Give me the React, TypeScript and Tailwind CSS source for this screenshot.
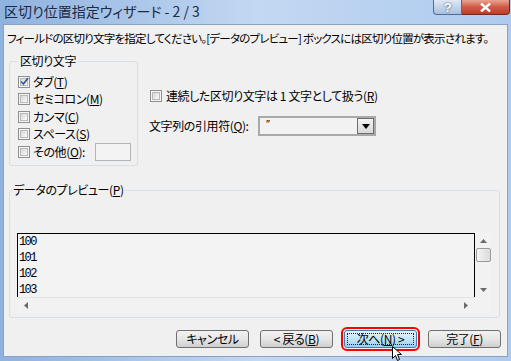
import React from "react";

const jp = "font-['Noto_Sans_CJK_JP',sans-serif] [font-feature-settings:'palt']";

function Check({ checked = false }: { checked?: boolean }) {
  return (
    <span className="flex h-[12px] w-[12px] shrink-0 items-center justify-center border border-[#8e8f8f] bg-[#f4f4f4]">
      <span className="flex h-[8px] w-[8px] items-center justify-center border border-[#b9b9b9] bg-gradient-to-br from-[#d6d6d6] to-[#fbfbfb]">
        {checked && (
          <svg width="9" height="9" viewBox="0 0 9 9" className="overflow-visible">
            <path d="M1 4.5 L3.5 7 L8 1" fill="none" stroke="#3355a8" strokeWidth="1.7" />
          </svg>
        )}
      </span>
    </span>
  );
}

function Acc({ label, k }: { label: string; k: string }) {
  return (
    <span>
      {label}(<span className="underline">{k}</span>)
    </span>
  );
}

function Btn({ children, active = false }: { children: React.ReactNode; active?: boolean }) {
  return (
    <div
      className={
        active
          ? "flex h-[18px] w-[73px] items-center justify-center rounded-[3px] border border-[#3c7fb1] bg-gradient-to-b from-[#e5f4fc] via-[#c4e5f6] to-[#98d1ef] p-[2px] outline-2 outline-offset-[1px] outline-[#ff0000]"
          : "flex h-[18px] w-[73px] items-center justify-center rounded-[3px] border border-[#707070] bg-gradient-to-b from-[#f2f2f2] via-[#e6e6e6] to-[#cfcfcf]"
      }
    >
      {active ? (
        <span className="flex h-full w-full items-center justify-center border border-dotted border-[#222]">{children}</span>
      ) : (
        children
      )}
    </div>
  );
}

function Tri({ dir }: { dir: "up" | "down" | "left" | "right" }) {
  const d = {
    up: "M0 4 L3.5 0 L7 4 Z",
    down: "M0 0 L7 0 L3.5 4 Z",
    left: "M4 0 L4 7 L0 3.5 Z",
    right: "M0 0 L4 3.5 L0 7 Z",
  }[dir];
  const w = dir === "up" || dir === "down" ? 7 : 4;
  const h = dir === "up" || dir === "down" ? 4 : 7;
  return (
    <svg width={w} height={h} viewBox={`0 0 ${w} ${h}`}>
      <path d={d} fill="#6b6b6b" />
    </svg>
  );
}

export default function App() {
  return (
    <div className={`relative flex h-[361px] w-[511px] flex-col overflow-hidden bg-gradient-to-r from-[#8fb2df] via-[#c3d8f2] to-[#aecbef] text-[12px] tracking-[-0.4px] text-black ${jp}`}>
      {/* title bar */}
      <div className="flex h-[24px] shrink-0 items-start justify-between">
        <span className="pl-[4px] pt-[2px] text-[14px] leading-[18px] tracking-normal text-[#1c2b44]">区切り位置指定ウィザード - 2 / 3</span>
        <div className="mr-[1px] flex h-[15px]">
          <div className="flex w-[29px] items-center justify-center rounded-bl-[4px] border border-t-0 border-[#4e6c94] bg-gradient-to-b from-[#dfe9f6] to-[#a9c0de] font-['Liberation_Sans',sans-serif] text-[13px] font-bold leading-none text-white [text-shadow:0_0_2px_#2a3b55]">
            ?
          </div>
          <div className="flex w-[48px] items-center justify-center rounded-br-[4px] border border-l-0 border-t-0 border-[#6d2b25] bg-gradient-to-b from-[#e8a493] via-[#cf5a44] to-[#c23c26]">
            <svg width="11" height="9" viewBox="0 0 11 9">
              <path d="M1 0.5 L10 8.5 M10 0.5 L1 8.5" stroke="#fff" strokeWidth="2.4" />
            </svg>
          </div>
        </div>
      </div>

      {/* dialog body */}
      <div className="mx-[3px] mb-[4px] flex flex-1 flex-col border border-[#8aa2c2] bg-[#f0f0f0]">
        <div className="whitespace-nowrap pl-[3px] pt-[6px] text-[11.5px] leading-[14px] tracking-[-0.78px]">
          フィールドの区切り文字を指定してください。[データのプレビュー] ボックスには区切り位置が表示されます。
        </div>

        <div className="mt-[9px] flex">
          <fieldset className="ml-[5px] h-[112px] w-[129px] rounded-[3px] border border-[#d5dfe5] pl-[8px]">
            <legend className="px-[2px] leading-[14px]">区切り文字</legend>
            <div className="mt-[5px] flex flex-col">
              <label className="flex h-[17.5px] items-center gap-[3px]">
                <Check checked />
                <Acc label="タブ" k="T" />
              </label>
              <label className="flex h-[17.5px] items-center gap-[3px]">
                <Check />
                <Acc label="セミコロン" k="M" />
              </label>
              <label className="flex h-[17.5px] items-center gap-[3px]">
                <Check />
                <Acc label="カンマ" k="C" />
              </label>
              <label className="flex h-[17.5px] items-center gap-[3px]">
                <Check />
                <Acc label="スペース" k="S" />
              </label>
              <label className="flex h-[17.5px] items-center gap-[3px]">
                <Check />
                <span>
                  その他(<span className="underline">O</span>):
                </span>
                <span className="ml-auto mr-[6px] h-[18px] w-[36px] border border-[#b5b5b5] bg-[#f3f3f3]" />
              </label>
            </div>
          </fieldset>

          <div className="ml-[11px] flex flex-col pt-[33px]">
            <label className="flex items-center gap-[4px] pl-[1px]">
              <Check />
              <span>
                連続した区切り文字は 1 文字として扱う(<span className="underline">R</span>)
              </span>
            </label>
            <div className="mt-[11px] flex items-center">
              <span className="w-[109px]">
                文字列の引用符(<span className="underline">Q</span>):
              </span>
              <div className="flex h-[20px] w-[118px] border-2 border-[#a9a9a9] bg-[#f2f2f2]">
                <span className="flex-1 pl-[6px] font-['Liberation_Sans',sans-serif] text-[11px] leading-[12px]">″</span>
                <div className="flex w-[17px] items-center justify-center border border-[#6f6f6f] bg-gradient-to-b from-[#f4f4f4] to-[#d8d8d8]">
                  <svg width="8" height="5" viewBox="0 0 8 5">
                    <path d="M0 0 L8 0 L4 5 Z" fill="#000" />
                  </svg>
                </div>
              </div>
            </div>
          </div>
        </div>

        <fieldset className="ml-[5px] mt-[17px] h-[135px] w-[491px] rounded-[3px] border border-[#d5dfe5] pl-[7px]">
          <legend className="ml-[-5px] px-[1px] leading-[14px]">
            データのプレビュー(<span className="underline">P</span>)
          </legend>
          <div className="mt-[36px] flex w-[474px] flex-col">
            <div className="flex h-[64px]">
              <div className="flex-1 border border-b-0 border-black bg-[#f3f3f3] pl-[1px] font-['Liberation_Mono',monospace] text-[12px] leading-[16px] tracking-[-1.6px]">
                <div>100</div>
                <div>101</div>
                <div>102</div>
                <div>103</div>
              </div>
              <div className="flex w-[16px] flex-col items-center bg-[#f2f2f2]">
                <div className="mt-[6px]">
                  <Tri dir="up" />
                </div>
                <div className="mt-[5px] h-[14px] w-[15px] rounded-[2px] border border-[#9a9a9a] bg-gradient-to-r from-[#f4f4f4] to-[#dcdcdc]" />
                <div className="mt-auto mb-[5px]">
                  <Tri dir="down" />
                </div>
              </div>
            </div>
            <div className="flex h-[16px]">
              <div className="flex flex-1 items-center justify-between border-t border-[#e4e4e4] bg-[#f2f2f2] px-[7px]">
                <Tri dir="left" />
                <Tri dir="right" />
              </div>
              <div className="w-[16px] bg-[#f2f2f2]" />
            </div>
          </div>
        </fieldset>

        <div className="mt-[12px] flex justify-end gap-[11px] pr-[6px] leading-[14px]">
          <Btn>キャンセル</Btn>
          <Btn>
            &lt; 戻る(<span className="underline">B</span>)
          </Btn>
          <Btn active>
            次へ(<span className="underline">N</span>) &gt;
          </Btn>
          <Btn>
            完了(<span className="underline">F</span>)
          </Btn>
        </div>
      </div>

      {/* mouse pointer */}
      <svg className="absolute left-[392px] top-[346px]" width="12" height="16" viewBox="0 0 12 16">
        <path d="M0.5 0.5 L0.5 12.5 L3.5 9.5 L5.5 14.5 L7.5 13.5 L5.5 8.5 L9.5 8.5 Z" fill="#fff" stroke="#000" strokeWidth="1" />
      </svg>
    </div>
  );
}
